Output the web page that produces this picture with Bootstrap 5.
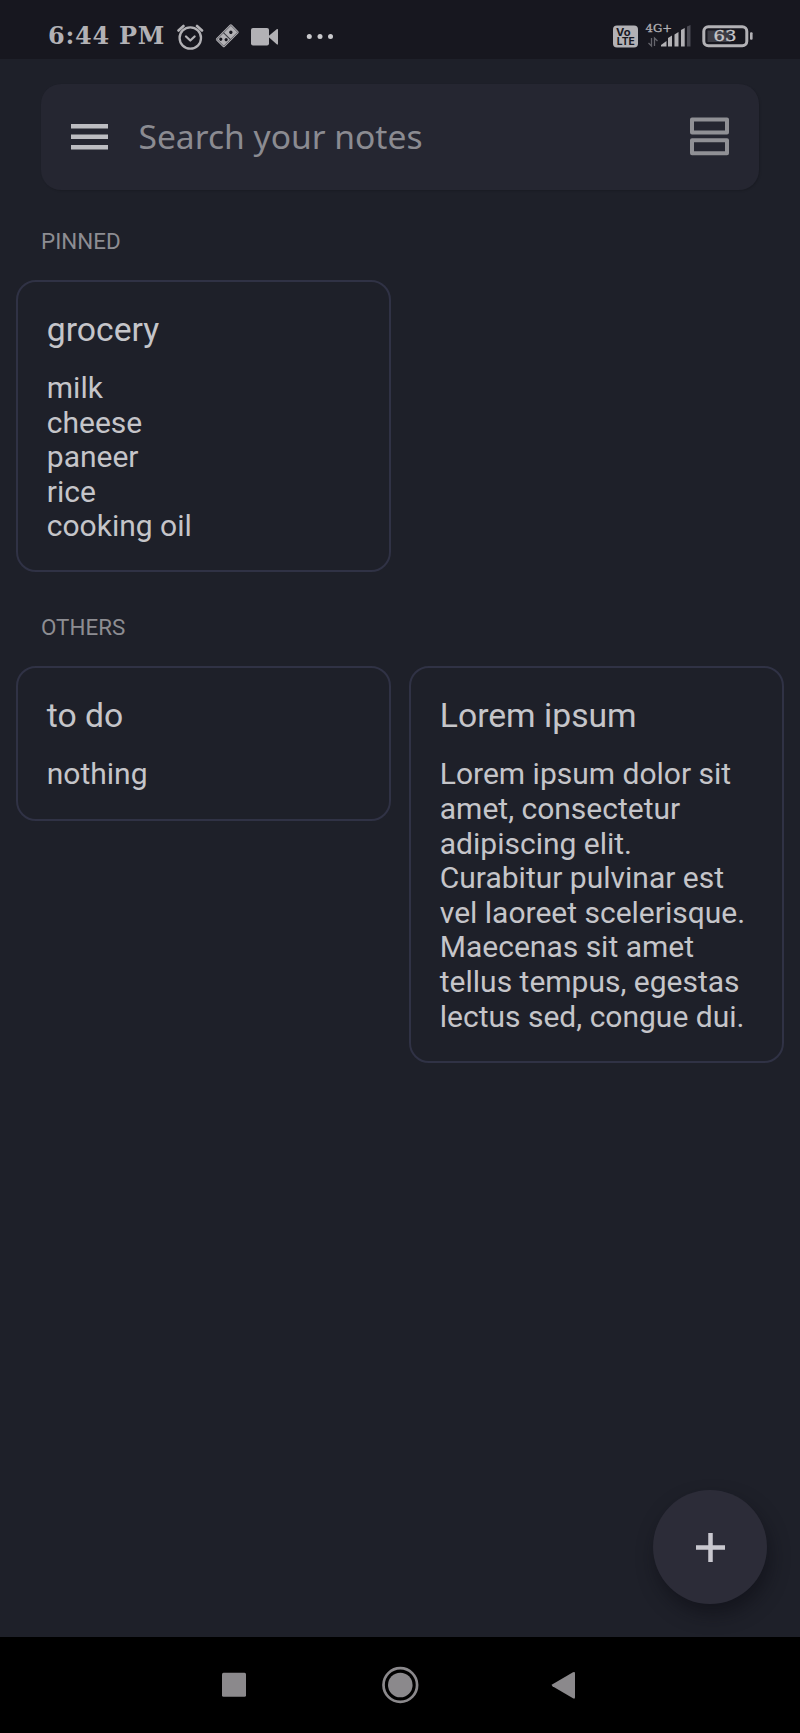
<!DOCTYPE html>
<html lang="en">
<head>
<meta charset="utf-8">
<meta name="viewport" content="width=device-width, initial-scale=1">
<title>Notes</title>
<link href="https://cdn.jsdelivr.net/npm/bootstrap@5.3.0/dist/css/bootstrap.min.css" rel="stylesheet">
<style>
  body { background: #1e2029; color: #c5c5c9; font-family: Roboto, sans-serif; height: 1733px; overflow: hidden; }
  svg { display: block; flex: none; }
  .status-bar { height: 59px; background: #17171f; color: #b2b1b5; padding: 14px 47px 0 48px; font-family: "DejaVu Serif", serif; }
  .clock { font-size: 24px; font-weight: 700; line-height: 44px; letter-spacing: .75px; width: 129px; white-space: nowrap; }
  .search-bar { height: 105.5px; margin: 25px 41px 0; padding: 0 30px; border-radius: 20px; background: #252631; box-shadow: 1px 1px 2px rgba(0,0,0,.15); }
  .search-text { font: 33.6px/46px "Noto Sans", sans-serif; color: #8b8b91; margin: -1px 0 0 30.5px; }
  .section-label { font-size: 22.4px; line-height: 26px; color: #8d8d92; margin: 0 0 0 41px; font-weight: 400; }
  .pinned-label { padding-top: 38.5px; }
  .others-label { padding-top: 42px; }
  .notes { padding: 25.5px 16px 0; gap: 18.5px; }
  .note { width: 374.5px; border: 2px solid #303245; border-radius: 20px; background: transparent; color: inherit; padding: 28px 28.8px 26.5px; }
  .note-title { font-size: 33.7px; line-height: 40px; font-weight: 400; margin: 0 0 21.5px; }
  .note-body { font-size: 30px; line-height: 34.6px; margin: 0; white-space: nowrap; }
  .add-btn { right: 33px; bottom: 33px; width: 114px; height: 114px; background: #2c2c38; box-shadow: 3px 10px 18px rgba(12,12,20,.55); }
  .nav-keys { height: 96px; background: #000; }
</style>
</head>
<body class="d-flex flex-column">
<header class="status-bar d-flex flex-shrink-0">
  <div class="clock">6:44 PM</div>
  <svg width="170" height="44" viewBox="177 14 170 44" fill="none">
    <g stroke="#b2b1b5" stroke-width="2.3" stroke-linecap="round" stroke-linejoin="round">
      <circle cx="190.300" cy="38" r="10.700"/>
      <path d="M186 36.500l4.300 4 4.300-4"/>
      <path d="M178.500 30.500l5-4.500M202 30.500l-5-4.500" stroke-width="2.600"/>
    </g>
    <g transform="translate(227.300 35.800) rotate(-45)">
      <rect x="-11" y="-6" width="22" height="12" rx="1.500" fill="#b2b1b5"/>
      <rect x="-9.800" y="-4.800" width="19.600" height="9.600" fill="none" stroke="#3a3a42" stroke-width=".6"/>
      <path d="M-.5-5v10" stroke="#3a3a42" stroke-width="1"/>
      <g fill="#17171f"><circle cx="5" r="1.700"/><circle cx="-7" cy="-2.200" r="1.600"/><circle cx="-3.500" cy="1.900" r="1.600"/></g>
    </g>
    <g fill="#b2b1b5"><rect x="251" y="28" width="18" height="17.500" rx="2"/><path d="M268 36.500l9-7.500q1-.5 1 1v13.500q0 1.500-1 1z"/></g>
    <g fill="#c9c9cc"><circle cx="309.300" cy="36.500" r="2.500"/><circle cx="320" cy="36.500" r="2.500"/><circle cx="330.500" cy="36.500" r="2.500"/></g>
  </svg>
  <svg class="ms-auto" width="142" height="44" viewBox="611 14 142 44">
    <rect x="613" y="25.500" width="25" height="22" rx="4" fill="#b2b1b5"/>
    <g font-family="Inter, sans-serif" font-weight="700" fill="#17171f">
      <text x="616" y="35.500" font-size="10.500" textLength="14.500" lengthAdjust="spacingAndGlyphs">Vo</text>
      <text x="616.800" y="45.200" font-size="10.500" textLength="18" lengthAdjust="spacingAndGlyphs">LTE</text>
    </g>
    <text x="645.500" y="31.800" font-size="11.500" fill="#b2b1b5" stroke="#b2b1b5" stroke-width=".3" textLength="26.500" lengthAdjust="spacingAndGlyphs">4G+</text>
    <path d="M651.500 38v8l-3-3M654.500 46v-8l3 3" fill="none" stroke="#65656c" stroke-width="1.300"/>
    <g fill="#b2b1b5"><path d="M661 46.500v-1.500l5.500-4v5.500zM668 46.500v-8.500l4-2.500v11zM674.500 46.500v-12l4-2.500v14.500zM681 46.500v-16.500l3.700-2v18.500z"/><path d="M687 46.500v-20l3.500-1.500v21.500z" fill="#4b4b54"/></g>
    <rect x="703.800" y="26.800" width="43" height="19" rx="4.500" fill="none" stroke="#b2b1b5" stroke-width="3"/>
    <rect x="707.500" y="30.500" width="23" height="11.500" fill="#3d3d45"/>
    <rect x="750" y="32.300" width="2.600" height="7.500" rx="1" fill="#b2b1b5"/>
    <text x="713.500" y="41.300" font-size="15.500" fill="#c6c6c9" stroke="#c6c6c9" stroke-width=".3" textLength="23" lengthAdjust="spacingAndGlyphs">63</text>
  </svg>
</header>

<main class="flex-grow-1 position-relative">
  <div class="search-bar d-flex align-items-center">
    <svg width="37" height="26" fill="#bdbdc2"><path d="M0 0h37v4.500H0zM0 10.500h37v4.500H0zM0 21h37v4.500H0z"/></svg>
    <div class="search-text">Search your notes</div>
    <svg class="ms-auto" width="39" height="39" fill="none" stroke="#909095" stroke-width="4" stroke-linejoin="round"><path d="M2 2.500h35v13H2zM2 23.300h35v13H2z"/></svg>
  </div>

  <h2 class="section-label pinned-label">PINNED</h2>
  <div class="notes d-flex align-items-start">
    <article class="card note">
      <h3 class="note-title">grocery</h3>
      <p class="note-body">milk<br>cheese<br>paneer<br>rice<br>cooking oil</p>
    </article>
  </div>

  <h2 class="section-label others-label">OTHERS</h2>
  <div class="notes d-flex align-items-start">
    <article class="card note">
      <h3 class="note-title">to do</h3>
      <p class="note-body">nothing</p>
    </article>
    <article class="card note">
      <h3 class="note-title">Lorem ipsum</h3>
      <p class="note-body">Lorem ipsum dolor sit<br>amet, consectetur<br>adipiscing elit.<br>Curabitur pulvinar est<br>vel laoreet scelerisque.<br>Maecenas sit amet<br>tellus tempus, egestas<br>lectus sed, congue dui.</p>
    </article>
  </div>

  <button class="add-btn btn border-0 rounded-circle position-absolute d-flex align-items-center justify-content-center p-0" aria-label="Add note">
    <svg width="29" height="29" stroke="#c9c8cf" stroke-width="4.500"><path d="M14.500 0v29M0 14.500h29"/></svg>
  </button>
</main>

<footer class="nav-keys flex-shrink-0">
  <svg width="800" height="96" viewBox="0 1637 800 96" fill="#8b898c">
    <rect x="222" y="1672.800" width="24" height="24" rx="1.500"/>
    <circle cx="400.300" cy="1685" r="12.300"/>
    <circle cx="400.300" cy="1685" r="16.800" fill="none" stroke="#8b898c" stroke-width="2.700"/>
    <path d="M552.500 1684.300l20.500-12q2-1 2 1v24q0 2-2 1l-20.500-12q-1.500-1 0-2z"/>
  </svg>
</footer>
<script src="https://cdn.jsdelivr.net/npm/bootstrap@5.3.0/dist/js/bootstrap.bundle.min.js"></script>
</body>
</html>
